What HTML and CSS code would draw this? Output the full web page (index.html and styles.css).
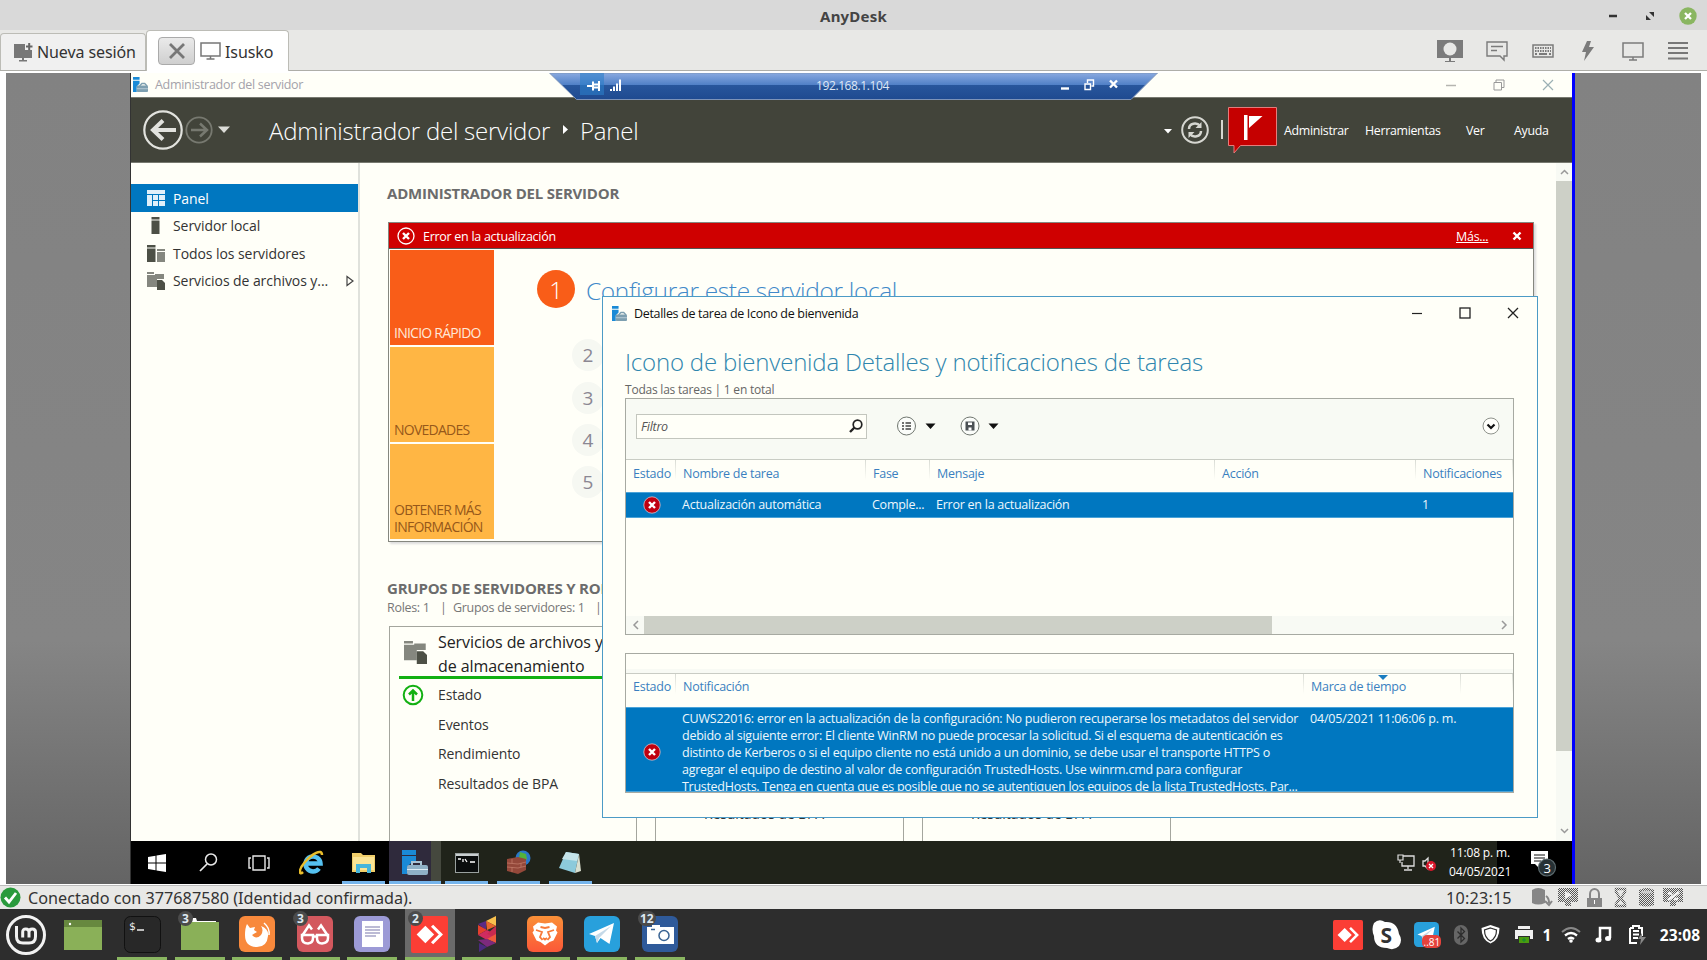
FILE: index.html
```html
<!DOCTYPE html>
<html lang="es">
<head>
<meta charset="utf-8">
<title>AnyDesk</title>
<link rel="stylesheet" href="styles.css">
</head>
<body>
<svg class="defs" width="0" height="0">
  <symbol id="server" viewBox="0 0 16 16"><path d="M0 0h7v3H0zM0 4h7v3L4 10v6H0z" fill="#1a8ad6"/><path d="M7 9.500L9.500 7h3L15 9.500" fill="none" stroke="#7d9fb0" stroke-width="1.500"/><rect x="4" y="9" width="12" height="7" rx="1" fill="#7d9fb0"/><path d="M4 12.500h12" stroke="#b9ccd6"/></symbol>
  <symbol id="error" viewBox="0 0 18 18"><circle cx="9" cy="9" r="8.2" fill="#c00010" stroke="#d9c3cc" stroke-width=".8"/><path d="M6 6l6 6M12 6l-6 6" stroke="#fff" stroke-width="2.4"/></symbol>
  <symbol id="files" viewBox="0 0 18 18"><path d="M0 0h7v2H0zM0 3h8V2h9v5h-7v8H0z" fill="#85877f"/><path d="M10 8h5l3 3v7h-8z" fill="#4d5046"/></symbol>
  <symbol id="anydesk" viewBox="0 0 36 36"><rect width="36" height="36" rx="2" fill="#fb3e35"/><path d="M14 9.500l8.500 8.500-8.500 8.500L5.500 18z" fill="#fff"/><path d="M20.500 9.500L29 18l-8.500 8.500" fill="none" stroke="#fff" stroke-width="3"/></symbol>
  <symbol id="plane" viewBox="0 0 36 36"><rect width="36" height="36" rx="6" fill="#28a0dc"/><path d="M5 18L30 7l-4.500 21-9-6-3.500 5-2-7z" fill="#fff"/><path d="M11 20L27 10 15 22l-2 5z" fill="#c5d9e8"/></symbol>
</svg>

<header class="titlebar">
  <h1>AnyDesk</h1>
  <div class="winbtns">
    <svg width="10" height="10"><path d="M1 5h8" stroke="#333" stroke-width="2.500"/></svg>
    <svg width="10" height="10"><path d="M4 1h5v5zM1 4v5h5z" fill="#333"/></svg>
    <svg width="18" height="18"><circle cx="9" cy="9" r="8.700" fill="#8ab661"/><path d="M6 6l6 6M12 6l-6 6" stroke="#fff" stroke-width="2.300"/></svg>
  </div>
</header>

<nav class="tabs">
  <div class="tab tab-new">
    <svg width="21" height="20"><path d="M1 2h11v6h7v8H1zM9 16h2v2h3v1.500H6V18h3z" fill="#777"/><path d="M13 4.500h6.500M16.200 1v7" stroke="#666" stroke-width="2"/></svg>
    <span>Nueva sesión</span>
  </div>
  <div class="tab tab-on">
    <b class="tab-x"><svg width="18" height="18"><path d="M2 2l14 14M16 2L2 16" stroke="#777" stroke-width="2.800"/></svg></b>
    <svg width="21" height="18"><path d="M1 1h19v13H1zM10.500 14v3M6.500 17h8" fill="none" stroke="#777" stroke-width="1.500"/></svg>
    <span>Isusko</span>
  </div>
  <div class="tools">
    <svg width="26" height="24"><path d="M0 1h26v18H0zM12 19h2v3h4v1H8v-1h4z" fill="#7b7b7b"/><ellipse cx="13" cy="10" rx="6.500" ry="6.500" fill="#e8e8e6"/></svg>
    <svg width="22" height="22"><path d="M1 2h20v14h-3v4l-4-4H1z" fill="none" stroke="#7b7b7b" stroke-width="1.400"/><path d="M5 6.500h12M5 10.500h6" stroke="#7b7b7b" stroke-width="1.400"/></svg>
    <svg width="22" height="14"><rect x="1" y="1" width="20" height="12" fill="none" stroke="#7b7b7b" stroke-width="1.500"/><path d="M3 4h16M3 7h16" stroke="#7b7b7b" stroke-width="2" stroke-dasharray="1.500 1"/><path d="M3 10h2M7 10h8M17 10h2" stroke="#7b7b7b" stroke-width="2"/></svg>
    <svg width="14" height="20"><path d="M6 0h4L8 6h5L3 20l2-9H1z" fill="#7b7b7b"/></svg>
    <svg width="22" height="20"><path d="M1 2h20v14H1zM11 16v3M7 19h8" fill="none" stroke="#7b7b7b" stroke-width="1.500"/></svg>
    <svg width="20" height="20"><path d="M0 2h20M0 7h20M0 12h20M0 17.500h20" stroke="#777" stroke-width="2.200"/></svg>
  </div>
</nav>

<section class="viewport">
 <div class="remote">
  <div class="sm-title">
    <svg width="15" height="15"><use href="#server"/></svg>
    <span>Administrador del servidor</span>
    <svg width="12" height="12"><path d="M1 6.500h10" stroke="#b5b5b0" stroke-width="1.500"/></svg>
    <svg width="12" height="12"><path d="M1 3.500h7.500V11H1zM3 3.500V1h8v7.500H8.500" fill="none" stroke="#999"/></svg>
    <svg width="12" height="12"><path d="M1 1l10 10M11 1L1 11" stroke="#9bb0b4" stroke-width="1.200"/></svg>
  </div>

  <div class="sm-head">
    <svg class="nav" width="88" height="42"><g fill="none" stroke="#e2e3de"><circle cx="20" cy="21" r="18.700" stroke-width="2.200"/><path d="M33 21H11M20 11.500L10 21l10 9.500" stroke-width="4"/></g><g fill="none" stroke="#777970"><circle cx="56" cy="21" r="12.700" stroke-width="1.800"/><path d="M48 21h15M57 14.500l7 6.500-7 6.500" stroke-width="2.500"/></g><path d="M75 17.500h12l-6 6.500z" fill="#dcddd8"/></svg>
    <span class="crumb c1">Administrador del servidor</span>
    <svg width="6" height="10"><path d="M0 0l5 4.500L0 9z" fill="#fff"/></svg>
    <span class="crumb c2">Panel</span>
    <svg class="flagset" width="118" height="54"><path d="M2 25h8l-4 4.500z" fill="#fff"/><circle cx="33" cy="26" r="12.800" fill="none" stroke="#d6d7d1" stroke-width="2"/><path d="M27 25c0-6 8-7 11-3M39 27c0 6-8 7-11 3" fill="none" stroke="#d6d7d1" stroke-width="2.500"/><path d="M39.500 18v6h-6zM26.500 34v-6h6z" fill="#d6d7d1"/><path d="M60 16v19" stroke="#d6d7d1" stroke-width="2"/><path d="M66.500 3.500h48v38h-36L72 49v-7.500h-5.500z" fill="#c50000" stroke="#e47c7c"/><path d="M82 11h3.500v25H82zM87 12h13.500L87 24z" fill="#fff"/></svg>
    <span class="m">Administrar</span><span class="m">Herramientas</span><span class="m">Ver</span><span class="m">Ayuda</span>
  </div>

  <div class="sm-body">
    <aside class="side">
      <div class="row on"><svg width="18" height="16"><path d="M0 0h18v4H0zM0 5h5v11H0zM6 5h5v5H6zM12 5h6v5h-6zM6 11h5v5H6zM12 11h6v5h-6z" fill="#e0f0fa"/></svg><span>Panel</span></div>
      <div class="row"><svg width="18" height="17"><path d="M4.500 0h8v2.500h-8zM4.500 3.500h8V17h-8z" fill="#4d5046"/></svg><span>Servidor local</span></div>
      <div class="row"><svg width="18" height="17"><path d="M0 0h8.500v2.500H0zM0 3.500h8.500V17H0z" fill="#4d5046"/><path d="M10 4h8v2h-8zM10 7h8v10h-8z" fill="#85877f"/></svg><span>Todos los servidores</span></div>
      <div class="row"><svg width="18" height="18"><use href="#files"/></svg><span>Servicios de archivos y...</span><svg width="8" height="12"><path d="M1 1.500v9L7 6z" fill="none" stroke="#444" stroke-width="1.200"/></svg></div>
    </aside>

    <main class="dash">
      <h2 class="h-adm">ADMINISTRADOR DEL SERVIDOR</h2>
      <div class="welcome">
        <div class="alert">
          <svg width="18" height="18"><circle cx="9" cy="9" r="8" fill="none" stroke="#fff" stroke-width="1.300"/><path d="M6 6l6 6M12 6l-6 6" stroke="#fff" stroke-width="2.400"/></svg>
          <span>Error en la actualización</span><u>Más...</u>
          <svg width="10" height="10"><path d="M1.500 1.500l7 7M8.500 1.500l-7 7" stroke="#fff" stroke-width="2.400"/></svg>
        </div>
        <div class="wbody">
          <div class="tiles"><div class="tile hot">INICIO RÁPIDO</div><div class="tile">NOVEDADES</div><div class="tile t3">OBTENER MÁS INFORMACIÓN</div></div>
          <div class="steps">
            <div class="step1"><i>1</i><span>Configurar este servidor local</span></div>
            <i>2</i><i>3</i><i>4</i><i>5</i>
          </div>
        </div>
      </div>
      <h2 class="h-grp">GRUPOS DE SERVIDORES Y ROLES</h2>
      <p class="counts"><span>Roles: 1</span><span>|</span><span>Grupos de servidores: 1</span><span>|</span></p>
      <div class="cards">
        <div class="card">
          <div class="card-h"><svg width="23" height="23" viewBox="0 0 18 18"><use href="#files"/></svg><span>Servicios de archivos y de almacenamiento</span></div>
          <div class="line st"><svg width="22" height="22"><circle cx="11" cy="11" r="9.300" fill="none" stroke="#12b012" stroke-width="2"/><path d="M11 17V7M7 10.500L11 6.500l4 4" fill="none" stroke="#12b012" stroke-width="2.500"/></svg><span>Estado</span></div>
          <div class="line">Eventos</div><div class="line">Rendimiento</div><div class="line">Resultados de BPA</div>
        </div>
        <div class="card low"><div class="line">Resultados de BPA</div></div>
        <div class="card low"><div class="line">Resultados de BPA</div></div>
      </div>
    </main>

    <div class="vscroll">
      <svg width="16" height="18"><path d="M5 11l3.500-3.500L12 11" fill="none" stroke="#999" stroke-width="1.500"/></svg>
      <div class="thumb"></div>
      <svg width="16" height="18"><path d="M5 7l3.500 3.500L12 7" fill="none" stroke="#999" stroke-width="1.500"/></svg>
    </div>
  </div>

  <footer class="wtask">
    <div><svg width="18" height="18"><path d="M0 3l7.500-1.200V8.500H0zM8.500 1.600L18 0v8.500H8.500zM0 9.500h7.500v6.700L0 15zM8.500 9.500H18V18l-9.500-1.600z" fill="#fff"/></svg></div>
    <div><svg width="19" height="19"><circle cx="12" cy="6.500" r="5.500" fill="none" stroke="#e8e8e8" stroke-width="1.500"/><path d="M8 11l-7 7" stroke="#e8e8e8" stroke-width="1.700"/></svg></div>
    <div><svg width="24" height="18"><path d="M5 2h12v14H5zM3 4H1v10h2M19 4h2v10h-2" fill="none" stroke="#e8e8e8" stroke-width="1.400"/></svg></div>
    <div><svg width="26" height="26"><path d="M20 18.500a7.500 7.500 0 1 1 1.500-5H7" fill="none" stroke="#55c1f0" stroke-width="4.500"/><path d="M4 22C0 26-1 20 6 12S23-2 23 5" fill="none" stroke="#e9bd2b" stroke-width="2.500"/></svg></div>
    <div class="run"><svg width="23" height="21"><path d="M0 1h9l2 2h12v17H0z" fill="#f0ce6a"/><path d="M1 5h21v13H1z" fill="#fbe596"/><path d="M4 21v-9h15v9h-4v-5H8v5z" fill="#46b6dc"/></svg></div>
    <div class="run act"><svg width="27" height="26" viewBox="0 0 27 26"><path d="M0 0h14v5H0zM0 6h14v7H9l-4 4v7H0z" fill="#1a8ad6"/><path d="M10 15v-3h9v3" fill="none" stroke="#a9c3d4" stroke-width="2"/><rect x="5" y="15" width="21" height="10" rx="2" fill="#8fb0c6"/><path d="M5 19.500h21" stroke="#dcebf5"/></svg></div>
    <div class="run"><svg width="24" height="20"><rect x=".5" y=".5" width="23" height="19" fill="#0a0d0d" stroke="#99a09f"/><path d="M1 2h22" stroke="#c9cfd0" stroke-width="2"/><path d="M3 6h3M8 6v3M10 6l2 3M15 9h5" stroke="#fff" stroke-width="1.300"/></svg></div>
    <div class="run"><svg width="25" height="25"><circle cx="17" cy="8" r="7.500" fill="#2a78c8"/><path d="M14 2l6 2 1 5-4 4-4-5z" fill="#53b33b"/><path d="M1 9l11-2 8 2v11l-8 4L1 21z" fill="#94483a"/><path d="M1 13l11 1 8-2M1 17l11 1 8-2M6 9v4M15 13v4M6 17v5" fill="none" stroke="#c07a68" stroke-width=".8"/></svg></div>
    <div class="run"><svg width="24" height="24"><path d="M8 1l13 2-4 19-16-5z" fill="#8ccadb"/><path d="M8 1l13 2-2 7-15-2z" fill="#c5e4ea"/><path d="M21 3l2 17-6 2z" fill="#d9dfd0"/></svg></div>
    <section class="wtray">
      <svg width="32" height="20"><path d="M6 3h11v10H5V9M11 13v3M7 17h8" fill="none" stroke="#ddd" stroke-width="1.300"/><path d="M1 2h5v5H1zM3 7v3" fill="none" stroke="#ddd" stroke-width="1.200"/><path d="M26 8h2l3-3v11l-3-3h-2z" fill="none" stroke="#ddd" stroke-width="1.300"/></svg>
      <svg width="10" height="18"><circle cx="5" cy="12" r="5" fill="#d8172b"/><path d="M3 10l4 4M7 10l-4 4" stroke="#fff" stroke-width="1.300"/></svg>
      <p>11:08 p. m.<br>04/05/2021</p>
      <svg width="27" height="27"><path d="M1 1h17v13H9v4l-4-4H1z" fill="#fff"/><path d="M4 5h11M4 8h11M4 11h7" stroke="#111" stroke-width="1.200"/><circle cx="17" cy="17.500" r="8.500" fill="#263034" stroke="#5c6a6e" stroke-width="1.200"/><text x="13.400" y="22.500" class="n3">3</text></svg>
    </section>
  </footer>

  <div class="rdp">
    <svg class="rdp-bg" width="610" height="28"><defs><linearGradient id="g" x2="0" y2="1"><stop offset="0" stop-color="#8aaae0"/><stop offset=".46" stop-color="#4f7fc6"/><stop offset=".47" stop-color="#28569c"/><stop offset="1" stop-color="#1f4a90"/></linearGradient></defs><path d="M.5 0h608L582 26.500H27.500z" fill="url(#g)" stroke="#7d93b8"/><path d="M31 0h24v22H31z" fill="#2b7fca" opacity=".6"/></svg>
    <svg width="36" height="16"><path d="M0 8h6M6 3.500v9M6 6.500h6v3H6M12 3v10" fill="none" stroke="#fff" stroke-width="2"/><path d="M24 13v-2M27 13V8.500M30 13V5.500M33 13V1.500" stroke="#fff" stroke-width="2"/></svg>
    <span>192.168.1.104</span>
    <svg width="58" height="14"><path d="M0 10.500h8" stroke="#fff" stroke-width="2.400"/><path d="M24 6h5.500v5.500H24zM26.500 5V2h6v6h-2" fill="none" stroke="#fff" stroke-width="1.400"/><path d="M49 2.500l7 7M56 2.500l-7 7" stroke="#fff" stroke-width="2.400"/></svg>
  </div>

  <section class="dialog">
    <div class="d-title">
      <svg width="15" height="15"><use href="#server"/></svg><span>Detalles de tarea de Icono de bienvenida</span>
      <svg width="12" height="12"><path d="M1 6.500h10" stroke="#222" stroke-width="1.200"/></svg>
      <svg width="12" height="12"><rect x="1" y="1" width="10" height="10" fill="none" stroke="#222" stroke-width="1.300"/></svg>
      <svg width="12" height="12"><path d="M1 1l10 10M11 1L1 11" stroke="#222" stroke-width="1.300"/></svg>
    </div>
    <h3>Icono de bienvenida Detalles y notificaciones de tareas</h3>
    <p class="sub">Todas las tareas | 1 en total</p>
    <div class="box b1">
      <div class="bar">
        <div class="filter"><em>Filtro</em><svg width="14" height="14"><circle cx="8.500" cy="5.500" r="4.300" fill="none" stroke="#222" stroke-width="1.700"/><path d="M5.500 8.500L1 13" stroke="#222" stroke-width="2.400"/></svg></div>
        <svg width="103" height="20"><g fill="#fbfdfa" stroke="#70766f"><circle cx="10.500" cy="10" r="9"/><circle cx="74" cy="10" r="9"/></g><path d="M6 7h2M9.500 7H15M6 10h2M9.500 10H15M6 13h2M9.500 13H15" stroke="#444" stroke-width="1.500"/><path d="M69.500 5.500h9v9h-9z" fill="#4b5054"/><path d="M72 6.500h4V9h-4zM72.500 11.500h3v3h-3z" fill="#fff"/><path d="M29.500 7.500h10l-5 5.500zM92.500 7.500h10l-5 5.500z" fill="#111"/></svg>
        <svg width="18" height="18"><circle cx="9" cy="9" r="8" fill="#fffffa" stroke="#8f938c"/><path d="M5.500 7.500L9 11l3.500-3.500" fill="none" stroke="#111" stroke-width="2.200"/></svg>
      </div>
      <div class="cols g1"><span>Estado</span><span>Nombre de tarea</span><span>Fase</span><span>Mensaje</span><span>Acción</span><span>Notificaciones</span></div>
      <div class="sel g1"><svg width="18" height="18"><use href="#error"/></svg><span>Actualización automática</span><span>Comple...</span><span>Error en la actualización</span><span></span><span>1</span></div>
      <div class="hscroll"><svg width="18" height="18"><path d="M12 5L8 9l4 4" fill="none" stroke="#999" stroke-width="1.500"/></svg><div></div><svg width="18" height="18"><path d="M7 5l4 4-4 4" fill="none" stroke="#999" stroke-width="1.500"/></svg></div>
    </div>
    <div class="box b2">
      <div class="band"></div>
      <div class="cols g2"><span>Estado</span><span>Notificación</span><span class="sorted">Marca de tiempo</span><span></span></div>
      <div class="sel g2"><svg width="18" height="18"><use href="#error"/></svg>
        <p>CUWS22016: error en la actualización de la configuración: No pudieron recuperarse los metadatos del servidor<br>debido al siguiente error: El cliente WinRM no puede procesar la solicitud. Si el esquema de autenticación es<br>distinto de Kerberos o si el equipo cliente no está unido a un dominio, se debe usar el transporte HTTPS o<br>agregar el equipo de destino al valor de configuración TrustedHosts. Use winrm.cmd para configurar<br><span class="p5">TrustedHosts. Tenga en cuenta que es posible que no se autentiquen los equipos de la lista TrustedHosts. Par...</span></p>
        <p class="when">04/05/2021 11:06:06 p. m.</p></div>
    </div>
  </section>
 </div>
</section>

<div class="status">
  <svg width="21" height="21"><circle cx="10.500" cy="10.500" r="10" fill="#2a9a3c"/><path d="M5 10.500l4 4.500 7-9" fill="none" stroke="#fff" stroke-width="2.800"/></svg>
  <span>Conectado con 377687580 (Identidad confirmada).</span>
  <time>10:23:15</time>
  <svg class="sicons" width="154" height="22">
    <defs><pattern id="dots" width="2" height="2" patternUnits="userSpaceOnUse"><path d="M0 0h1v1H0zM1 1h1v1H1z" fill="#555"/></pattern></defs>
    <path d="M0 3q6-4 13 0v13q-7 3-13 0z" fill="#868686"/><path d="M14 9q3 2 3 7M13 14l4 4 3-4" fill="none" stroke="#868686" stroke-width="2"/>
    <path d="M26 1h20v14h-7v4h-6v-4h-7z" fill="url(#dots)"/><path d="M33 4l7 4-7 4z" fill="#eee"/>
    <path d="M55 11h15v9H55z" fill="#868686"/><path d="M58 11V7a4.500 5 0 0 1 9 0v4" fill="none" stroke="#868686" stroke-width="2"/><path d="M62.500 13v4" stroke="#fff"/>
    <path d="M84 2h9v3l-4 6 4 6v2h-9v-2l4-6-4-6z" fill="none" stroke="url(#dots)" stroke-width="2.500"/>
    <path d="M107 3q8-4 15 0v15q-8 3-15 0z" fill="url(#dots)"/><ellipse cx="114.500" cy="5" rx="5.500" ry="1.500" fill="#ccc"/>
    <path d="M131 1h20v14h-7v4h-6v-4h-7z" fill="url(#dots)"/><path d="M136 13l11-8M136 6l4 1M142 12h4" stroke="#f4f4f4" stroke-width="2.500"/>
  </svg>
</div>

<footer class="panel">
  <div class="launch"><svg width="42" height="42"><circle cx="21" cy="21" r="18.500" fill="none" stroke="#f2f2f2" stroke-width="3"/><path d="M11.500 12v10.500q0 6.500 6.500 6.500h6q6.500 0 6.500-6.500V18q0-3-3.200-3T24 18v5.500M24 18q0-3-3.200-3t-3.100 3v5.500" fill="none" stroke="#f2f2f2" stroke-width="3"/></svg></div>
  <div class="desk"><svg width="38" height="30"><path d="M0 0h38v30H0z" fill="#8ab058"/><path d="M0 0h38v7H0z" fill="#67883f"/><circle cx="6" cy="4" r="1.200" fill="#fff"/></svg></div>
  <div class="app"><svg width="37" height="37"><rect x=".5" y=".5" width="36" height="36" rx="6" fill="#282828" stroke="#111"/><text x="5" y="14" class="term">$</text><path d="M13 14h7" stroke="#eee" stroke-width="1.500"/></svg></div>
  <div class="app"><svg width="38" height="32"><path d="M11 0h4l1 3h19v4H11z" fill="#fff"/><path d="M0 4h38v28H0z" fill="#8ab058"/></svg><b>3</b></div>
  <div class="app"><svg width="36" height="36"><rect width="36" height="36" rx="6" fill="#f8893c"/><path d="M8 8l3 4 5-1-1 3 3 2-5 3q4 5 9 0 3-5 0-9 8 3 7 10-1 11-11 11Q6 31 6 19q0-7 2-11z" fill="#fff"/><path d="M25 7q6 5 5 12" fill="none" stroke="#fff" stroke-width="1.500"/></svg></div>
  <div class="app"><svg width="36" height="36"><rect width="36" height="36" rx="6" fill="#d3585e"/><g fill="none" stroke="#fff" stroke-width="2.500"><path d="M5 19h11v3q0 5-5 5.500-6 0-6-5.500zM20 19h11v3q0 5-6 5.500-5 0-5-5.500z"/><path d="M16 20.500h4M5 20l7-10.500 3 4M31 20L24 9.500l-3 4"/></g></svg><b>3</b></div>
  <div class="app"><svg width="36" height="36"><rect width="36" height="36" rx="6" fill="#9c9ad6"/><path d="M8 5h21v26H8z" fill="#fff"/><path d="M11 11h15M11 14h15M11 17h15M11 20h11" stroke="#7a78ac" stroke-width="1.200"/></svg></div>
  <div class="app cur"><svg width="37" height="37"><use href="#anydesk"/></svg><b>2</b></div>
  <div class="app"><svg width="18" height="36"><path d="M18 0v10L8 5z" fill="#f8c04e"/><path d="M8 5l10 5-9 4z" fill="#e8662c"/><path d="M0 8l8-3v9z" fill="#5a2a86"/><path d="M0 9l9 5-9 5z" fill="#e5402c"/><path d="M0 19l9-5 9 5-9 5z" fill="#d02c60"/><path d="M18 10v12l-9-4z" fill="#c92a50"/><path d="M9 23l9-5v9z" fill="#ef5a3c"/><path d="M0 24l9-1 9 4-9 4z" fill="#7c2a7c"/><path d="M1 27l8 4-8 5z" fill="#4a2a80"/></svg></div>
  <div class="app"><svg width="36" height="36"><defs><linearGradient id="br" x2="0" y2="1"><stop offset="0" stop-color="#fa9038"/><stop offset="1" stop-color="#fb5838"/></linearGradient></defs><rect width="36" height="36" rx="6" fill="url(#br)"/><path d="M11 6.500l7 1 7-1 5 4-1 4 1.500 2-4 8-4 1.500-4.500 3.500-4.500-3.500-4-1.500-4-8 1.500-2-1-4z" fill="#fff"/><path d="M9 14l6 2-2 5 2.500 3M27 14l-6 2 2 5-2.500 3M13.500 11l4.500 1 4.500-1M16 22l2 1.500 2-1.500" fill="none" stroke="#f87a3a" stroke-width="1.800"/></svg></div>
  <div class="app"><svg width="36" height="36"><use href="#plane"/></svg></div>
  <div class="app"><svg width="36" height="36"><rect width="36" height="36" rx="6" fill="#2f5a9a"/><path d="M5 11h5V9h8v2h14v17H5z" fill="#fff"/><circle cx="22" cy="19.500" r="5" fill="#fff" stroke="#3a6494" stroke-width="1.500"/><path d="M9 13.500h4" stroke="#3a6494" stroke-width="1.500"/></svg><b>12</b></div>
  <div class="tray">
    <svg width="30" height="30"><use href="#anydesk"/></svg>
    <svg width="30" height="30"><path d="M2 3q5-5 11-1 12-1 14 12 4 6 0 12-5 5-12 2Q2 28 2 16q-3-7 0-13z" fill="#fff"/><text x="8.500" y="22.500" class="sk">S</text></svg>
    <svg width="28" height="30"><svg width="25" height="25" y="2"><use href="#plane"/></svg><rect x="8" y="15" width="19" height="13" rx="5" fill="#e5423c"/><text x="9.500" y="25.500" class="t81">..81</text></svg>
    <svg width="14" height="20"><rect width="14" height="20" rx="7" fill="#666"/><path d="M3.500 6.500l7 7L7 17V3l3.500 3.500-7 7" fill="none" stroke="#2d2d2d" stroke-width="1.300"/></svg>
    <svg width="21" height="21"><path d="M10.500 1L19.500 4q0 12-9 15.500-9-3.500-9-15.500z" fill="#fff"/><path d="M10.500 4L16.500 6q0 8-6 11-6-3-6-11z" fill="none" stroke="#2d2d2d" stroke-width="1.200"/></svg>
    <svg width="18" height="18"><path d="M3 0h12v3H3zM0 4h18v9h-3v-3H3v3H0z" fill="#f0f0f0"/><path d="M4 11h10v6H4z" fill="#4a9c10"/><path d="M9 12v4M7 14h4" stroke="#183"/></svg>
    <strong>1</strong>
    <svg width="20" height="17"><path d="M1 6Q10-2 19 6" fill="none" stroke="#888" stroke-width="2"/><path d="M4 9.500q6-5 12 0M7 13q3-2.500 6 0" fill="none" stroke="#fff" stroke-width="2.300"/><circle cx="10" cy="15" r="1.800" fill="#fff"/></svg>
    <svg width="17" height="17"><path d="M5 14V2h10v10" fill="none" stroke="#fff" stroke-width="2.500"/><ellipse cx="3.500" cy="14" rx="3" ry="2.500" fill="#fff"/><ellipse cx="13" cy="12.500" rx="3" ry="2.500" fill="#fff"/></svg>
    <svg width="19" height="20"><path d="M2 3h3V1h6v2h3v8M9 18H2V3" fill="none" stroke="#fff" stroke-width="2"/><path d="M5 6h6M5 9.500h6M5 13h5" stroke="#fff" stroke-width="2"/><path d="M14 8l-4 6h3l-1 6 6-8h-4z" fill="#888"/></svg>
    <strong class="clock">23:08</strong>
  </div>
</footer>
</body>
</html>
```
FILE: styles.css
```css
* { box-sizing: border-box; }
body { margin: 0; width: 1707px; height: 960px; overflow: hidden; font-family: "Open Sans", "Noto Sans", sans-serif; color: #333; }
svg { display: block; flex: none; }
h1, h2, h3, p { margin: 0; font-weight: normal; }
span, p, h1, h2, h3, time, u { white-space: nowrap; }
.defs { position: absolute; }

.titlebar { height: 30px; background: #d9d9d9; display: grid; grid-template-columns: 1fr auto 1fr; align-items: center; padding-top: 1px; }
.titlebar h1 { grid-column: 2; font: bold 15px "Noto Sans", sans-serif; letter-spacing: .2px; color: #444; }
.winbtns { justify-self: end; display: flex; align-items: center; gap: 24px; padding-right: 10px; }
.winbtns :first-child { margin-right: 3px; }

.tabs { height: 41px; background: #e8e8e6; border-bottom: 1px solid #aeaea8; display: flex; align-items: flex-end; font: 16px "Noto Sans", sans-serif; }
.tab { display: flex; align-items: center; border: 1px solid #bcbcb6; border-bottom: 0; border-radius: 4px 4px 0 0; }
.tab-new { width: 146px; height: 37px; padding: 0 0 0 12px; gap: 3px; background: #f0f0f0; letter-spacing: -.1px; }
.tab-on { width: 143px; height: 41px; margin-bottom: -1px; padding-left: 11px; background: #fff; }
.tab-x { width: 37px; height: 28px; margin-right: 5px; border: 1px solid #aaa; border-radius: 4px; background: linear-gradient(#eaeaea, #cfcfcf); display: grid; place-items: center; }
.tab-on span { margin-left: 4px; letter-spacing: -.1px; padding-top: 1px; }
.tools { margin-left: auto; height: 100%; padding: 1px 7px 0 0; display: grid; grid-template-columns: 48px 46px 45px 45px 45px 45px; place-items: center; }

.viewport { height: 814px; background: linear-gradient(#828282 0, #858585 70%, #646464 100%); border: solid #fff; border-width: 2px 6px 1px; padding-left: 124px; }
.remote { position: relative; width: 1445px; height: 811px; background: #fffff8; border-right: 3px solid #00f; border-left: 1px solid #333; display: flex; flex-direction: column; }
.sm-title { height: 24px; padding-left: 2px; display: grid; grid-template-columns: 22px 1290px 48px 49px 30px; align-items: center; font-size: 12.500px; color: #a4a2aa; }
.sm-title span { letter-spacing: -.3px; }
.sm-head { height: 67px; background: #42443a; border: solid #777970; border-width: 1px 0; padding-left: 12px; display: grid; grid-template-columns: 126px 294px 17px 582px 122px 81px 101px 48px 1fr; align-items: center; color: #fff; }
.crumb { font-size: 24px; font-weight: 300; letter-spacing: -.23px; }
.m { font-size: 12.400px; letter-spacing: -.32px; }
.flagset { align-self: start; margin-top: 6px; }

.sm-body { height: 678px; display: grid; grid-template-columns: 229px 1fr 16px; }
.side { padding-top: 21px; border-right: 2px solid #e0e2dc; font-size: 14px; }
.row { height: 27.500px; padding-left: 16px; display: grid; grid-template-columns: 26px 173px 10px; align-items: center; }
.row span { letter-spacing: -.07px; }
.on { background: #0077c0; color: #fff; }
.dash { padding-left: 27px; overflow: hidden; }
.dash h2 { font-weight: bold; font-size: 15px; color: #6c6c6c; letter-spacing: -.22px; line-height: 20px; }
.h-adm { margin-top: 20px; }
.welcome { width: 1146px; height: 320px; margin: 19px 0 0 1px; border: 1px solid #85877f; box-shadow: 2px 2px 2px #ddd; }
.alert { height: 26px; background: #cf0000; border-bottom: 1px solid #555; padding-left: 8px; display: grid; grid-template-columns: 26px 1033px 56px 20px; align-items: center; color: #fff; font-size: 12.500px; }
.alert span, .alert u { letter-spacing: -.28px; padding-top: 1px; }
.wbody { display: flex; padding: 1px; }
.tiles { display: grid; gap: 2px; }
.tile { width: 104px; height: 95px; padding: 0 0 4px 4px; background: #ffb644; color: #96581a; font-size: 14px; line-height: 17px; letter-spacing: -.75px; display: flex; align-items: flex-end; }
.hot { background: #f95d18; color: #ffe9d8; }
.steps { padding: 20px 0 0 43px; }
.steps i { font-style: normal; display: grid; place-items: center; width: 32px; height: 32px; margin: 0 0 10.300px 35px; border-radius: 50%; background: #f6f8f2; color: #8b8792; font-size: 19px; }
.step1 { display: flex; align-items: center; gap: 11px; margin-bottom: 31px; font-size: 24.500px; font-weight: 300; letter-spacing: -.35px; color: #4189c9; }
.step1 span { padding-top: 2px; }
.step1 i { width: 38px; height: 38px; margin: 0; background: #f95d18; color: #fff; font-size: 24px; }
.h-grp { margin-top: 36px; }
.counts { display: grid; grid-template-columns: 53px 13px 142px 10px; margin-top: 1px; font-size: 12.500px; line-height: 18px; color: #777; }
.counts span { letter-spacing: -.3px; }
.cards { display: flex; gap: 18px; margin: 9px 0 0 2px; }
.card { width: 248px; height: 230px; border: 1px solid #a4a69e; padding-left: 9px; }
.card-h { height: 52px; margin-bottom: 1px; border-bottom: 3px solid #12b012; padding: 3px 0 0 5px; display: flex; align-items: flex-start; gap: 11px; font-size: 16px; line-height: 24px; }
.card-h svg { margin-top: 11px; }
.card-h span { width: 180px; white-space: normal; letter-spacing: -.08px; color: #222; }
.line { height: 29.500px; padding-left: 39px; font-size: 14px; line-height: 29.500px; letter-spacing: -.1px; }
.st { padding-left: 3px; display: flex; align-items: center; gap: 14px; }
.low { padding: 172px 0 0 9px; width: 249px; }
.vscroll { background: #f8faf4; }
.thumb { height: 570px; background: #cdd0c7; margin-bottom: 71px; }

.wtask { height: 43px; display: grid; grid-template-columns: repeat(9, 51.700px) 1fr; background: linear-gradient(90deg, #000 0 258px, #20231a 258px 1366px, #000 1366px); }
.wtask > div { display: grid; place-items: center; }
.run { background: linear-gradient(#76b5ec, #76b5ec) center bottom / 43px 3px no-repeat; }
.wtask > .act { background: linear-gradient(#76b5ec, #76b5ec) left bottom / 100% 3px no-repeat, linear-gradient(90deg, #2f2a3c 42px, #45483e 42px); }
.wtray { margin-left: auto; width: 175px; display: grid; grid-template-columns: 29px 23px 81px 1fr; align-items: center; color: #fff; font-size: 12px; }
.wtray p { line-height: 18.500px; letter-spacing: -.15px; text-align: center; width: 62px; }
.wtray :last-child { margin-top: 1px; }
.n3 { font-size: 13px; fill: #fff; }

.rdp { position: absolute; left: 418px; top: 0; width: 610px; height: 28px; padding-left: 38px; display: grid; grid-template-columns: 229px 245px 1fr; color: #dfe8f6; font-size: 12px; line-height: 26px; }
.rdp-bg { position: absolute; left: 0; top: 0; }
.rdp > :not(.rdp-bg) { position: relative; }
.rdp > svg:not(.rdp-bg) { margin-top: 5px; }
.rdp span { letter-spacing: -.4px; }

.dialog { position: absolute; left: 471px; top: 223px; width: 936px; height: 522px; border: 1px solid #4c9bc6; background: #fffff8; padding-left: 22px; font-size: 12.500px; letter-spacing: -.25px; }
.d-title { height: 32px; margin-left: -13px; display: grid; grid-template-columns: 22px 777px 48px 48px 20px; align-items: center; color: #111; letter-spacing: -.32px; }
.dialog h3 { margin-top: 16px; font-size: 24px; font-weight: 300; line-height: 34px; letter-spacing: -.19px; color: #2f86ae; }
.sub { line-height: 16px; margin-top: 3px; color: #666; font-size: 12px; letter-spacing: -.22px; }
.box { width: 889px; border: 1px solid #a7aaa2; }
.b1 { height: 237px; }
.bar { height: 61px; background: #f8faf4; border-bottom: 1px solid #c9ccc4; display: grid; grid-template-columns: 260px 586px 20px; padding: 3px 0 9px 10px; align-items: center; }
.filter { width: 231px; height: 25px; border: 1px solid #c3c6be; background: #fffff8; padding: 0 3px 0 4px; display: flex; align-items: center; justify-content: space-between; color: #555; }
.g1 { display: grid; grid-template-columns: 50px 190px 64px 285px 201px 1fr; }
.g2 { display: grid; grid-template-columns: 50px 628px 157px 1fr; }
.cols { height: 32px; color: #3a7fc0; line-height: 27px; }
.cols span { padding-left: 7px; background: linear-gradient(#d8dbd4, #fffff8) right top / 1px 20px no-repeat; }
.sel { height: 26px; background: #0077c0; border: solid #4ba3d8; border-width: 1px 0; color: #eef7fc; line-height: 22px; align-items: center; }
.sel > svg { margin-left: 17px; }
.sel > span { padding-left: 6px; }
.hscroll { height: 18px; margin-top: 98px; display: flex; background: #f8faf4; }
.hscroll div { width: 628px; margin-right: 223px; background: #cdd0c7; }
.b2 { height: 140px; margin-top: 18px; }
.band { height: 20px; border-bottom: 1px solid #c9ccc4; background: linear-gradient(#fffff8 15px, #f8faf4 15px); }
.b2 .cols { height: 33px; line-height: 26px; }
.b2 .sel { height: 85px; overflow: hidden; align-items: start; line-height: 17px; padding-top: 2px; }
.b2 .sel > svg { margin-top: 33px; }
.b2 .sel p { padding-left: 6px; }
.b2 .sel .when { letter-spacing: -.2px; }
.p5 { letter-spacing: -.29px; }
.sorted { position: relative; }
.sorted::after { content: ""; position: absolute; left: 74px; top: 1px; border: 5px solid transparent; border-top-color: #1a7cc0; border-bottom: 0; }

.status { height: 24px; background: #e8e8e6; border-top: 1px solid #bbb; display: grid; grid-template-columns: 28px 1418px 86px 1fr; align-items: center; font: 16.200px "Noto Sans", sans-serif; }
.status time { letter-spacing: .2px; }
.panel { height: 51px; background: #2d2d2d; display: flex; }
.launch { width: 52px; display: grid; place-items: center; }
.desk { width: 61.500px; padding: 11px 0 0 12px; }
.app { position: relative; width: 57.500px; display: grid; place-items: center; background: linear-gradient(#8ab661, #8ab661) center bottom / 50px 3px no-repeat; padding-bottom: 1px; }
.app b { position: absolute; left: 7px; top: 2px; min-width: 15px; height: 15px; padding: 0 2px; border-radius: 8px; background: #4b4b4b; color: #dfe9f2; font: bold 12px/15px "Noto Sans", sans-serif; text-align: center; }
.cur { background: linear-gradient(#8ab661, #8ab661) center bottom / 50px 3px no-repeat, linear-gradient(#6a6a6a, #6a6a6a) center / 50px 100% no-repeat; }
.term { font: 11px "DejaVu Sans Mono", monospace; fill: #eee; }
.tray { margin-left: auto; width: 379px; display: grid; grid-template-columns: 39px 40px 41px 26px 33px 33px 14px 33px 33px 35px 1fr; align-items: center; justify-items: center; padding-right: 2px; color: #fff; font: 15.500px "Noto Sans", sans-serif; }
.clock { letter-spacing: .1px; }
.sk { font: bold 21px "Open Sans", sans-serif; fill: #333; }
.t81 { font: 10px "Open Sans", sans-serif; fill: #fff; }
```
